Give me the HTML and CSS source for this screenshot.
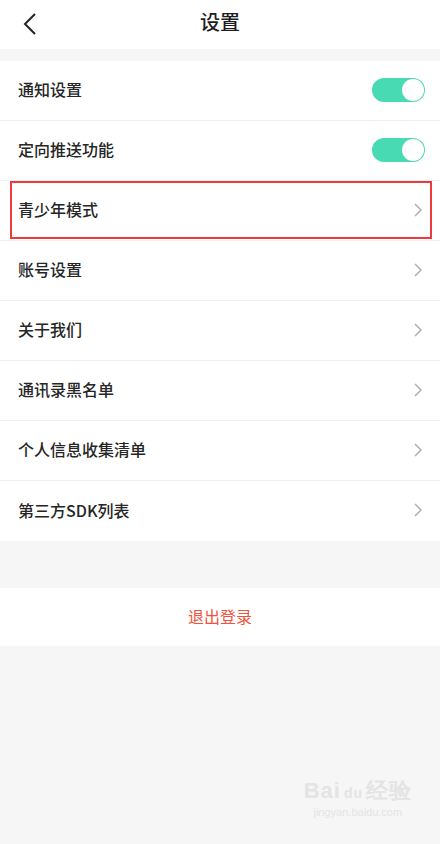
FILE: index.html
```html
<!DOCTYPE html>
<html>
<head>
  <title>设置</title>
  <meta charset="UTF-8">
  <link rel="stylesheet" href="styles.css">
</head>
<body>
  <div class="page">
    <div class="header">
      <svg class="back" width="14" height="24" viewBox="0 0 14 24"><path d="M12 2 L2 12 L12 22" fill="none" stroke="#222" stroke-width="2"/></svg>
      <span class="title">设置</span>
    </div>

    <div class="group">
      <div class="row">
        <span class="label">通知设置</span>
        <span class="toggle"><span class="knob"></span></span>
      </div>
      <div class="row">
        <span class="label">定向推送功能</span>
        <span class="toggle"><span class="knob"></span></span>
      </div>
      <div class="row marked">
        <span class="label">青少年模式</span>
        <svg class="arrow" width="10" height="16" viewBox="0 0 10 16"><path d="M2 2 L8 8 L2 14" fill="none" stroke="#b3b3b3" stroke-width="1.6"/></svg>
      </div>
      <div class="row">
        <span class="label">账号设置</span>
        <svg class="arrow" width="10" height="16" viewBox="0 0 10 16"><path d="M2 2 L8 8 L2 14" fill="none" stroke="#b3b3b3" stroke-width="1.6"/></svg>
      </div>
      <div class="row">
        <span class="label">关于我们</span>
        <svg class="arrow" width="10" height="16" viewBox="0 0 10 16"><path d="M2 2 L8 8 L2 14" fill="none" stroke="#b3b3b3" stroke-width="1.6"/></svg>
      </div>
      <div class="row">
        <span class="label">通讯录黑名单</span>
        <svg class="arrow" width="10" height="16" viewBox="0 0 10 16"><path d="M2 2 L8 8 L2 14" fill="none" stroke="#b3b3b3" stroke-width="1.6"/></svg>
      </div>
      <div class="row">
        <span class="label">个人信息收集清单</span>
        <svg class="arrow" width="10" height="16" viewBox="0 0 10 16"><path d="M2 2 L8 8 L2 14" fill="none" stroke="#b3b3b3" stroke-width="1.6"/></svg>
      </div>
      <div class="row">
        <span class="label">第三方SDK列表</span>
        <svg class="arrow" width="10" height="16" viewBox="0 0 10 16"><path d="M2 2 L8 8 L2 14" fill="none" stroke="#b3b3b3" stroke-width="1.6"/></svg>
      </div>
    </div>

    <div class="logout"><span class="label">退出登录</span></div>

    <div class="watermark">
      <div class="wm-logo">Bai<span class="paw">du</span>经验</div>
      <div class="wm-url">jingyan.baidu.com</div>
    </div>
  </div>
</body>
</html>
```

FILE: styles.css
```css
body {
  margin: 0;
  font-family: "Noto Sans CJK SC", "Noto Sans", sans-serif;
  background-color: #f6f6f6;
  color: #222;
}
.page {
  position: relative;
  width: 440px;
  height: 844px;
  overflow: hidden;
}
.header {
  position: relative;
  height: 49px;
  background-color: #fff;
  display: flex;
  align-items: center;
  justify-content: center;
}
.back {
  position: absolute;
  left: 23px;
  top: 12px;
}
.title {
  font-size: 20px;
  font-weight: 500;
  line-height: 20px;
  padding-bottom: 5px;
  color: #1e1e1e;
}
.group {
  margin-top: 12px;
  background-color: #fff;
}
.row {
  height: 59px;
  display: flex;
  align-items: center;
  justify-content: space-between;
  padding: 0 15px 0 18px;
  font-size: 16px;
  border-bottom: 1px solid #f1f1f1;
}
.row:last-child {
  border-bottom: none;
  height: 60px;
}
.label {
  line-height: 16px;
  padding-bottom: 3px;
  font-weight: 500;
  color: #262626;
}
.marked {
  position: relative;
}
.marked::after {
  content: "";
  position: absolute;
  left: 10px;
  right: 8px;
  top: 0;
  bottom: 1px;
  border: 2px solid #ee3a3a;
}
.toggle {
  position: relative;
  width: 53px;
  height: 24px;
  margin-bottom: 2px;
  border-radius: 12px;
  background-color: #48dbb3;
}
.knob {
  position: absolute;
  right: 1px;
  top: 1px;
  width: 22px;
  height: 22px;
  border-radius: 50%;
  background-color: #fff;
}
.arrow {
  margin-right: 2px;
  margin-bottom: 2px;
}
.logout {
  margin-top: 47px;
  height: 58px;
  background-color: #fff;
  display: flex;
  align-items: center;
  justify-content: center;
  font-size: 16px;
}
.logout .label {
  color: #f0533f;
  font-weight: 400;
}
.watermark {
  position: absolute;
  right: 28px;
  bottom: 26px;
  color: #e4e4e4;
  text-align: center;
  font-family: "Liberation Sans", sans-serif;
}
.wm-logo {
  font-size: 22px;
  font-weight: bold;
  letter-spacing: 1px;
}
.paw {
  font-size: 14px;
  padding: 0 3px;
}
.wm-url {
  font-size: 11px;
}
```
